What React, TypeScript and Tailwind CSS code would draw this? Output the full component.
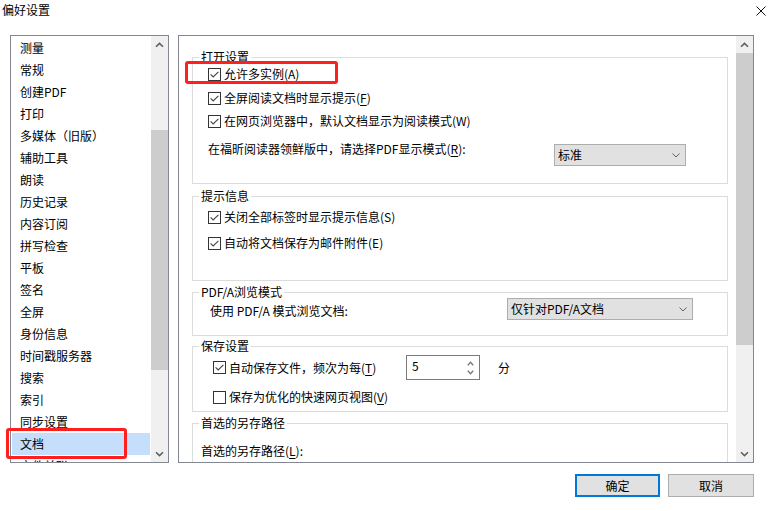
import React from "react";

type Kid = { children?: React.ReactNode };

function Check({ checked = true }: { checked?: boolean }) {
  return (
    <svg width="13" height="13" viewBox="0 0 13 13" className="block shrink-0">
      <rect x="0.5" y="0.5" width="12" height="12" fill="#fff" stroke="#333" />
      {checked && (
        <path d="M2.6 6.4 5.2 9 10.4 3.8" fill="none" stroke="#444" strokeWidth="1.1" />
      )}
    </svg>
  );
}

function U({ children }: Kid) {
  return <span className="underline underline-offset-[2px]">{children}</span>;
}

function CheckRow({
  checked = true,
  children,
  className = "",
}: Kid & { checked?: boolean; className?: string }) {
  return (
    <div className={"flex h-[18px] items-center gap-[3px] " + className}>
      <Check checked={checked} />
      <span className="whitespace-nowrap leading-[18px]">{children}</span>
    </div>
  );
}

function Chevron() {
  return (
    <svg width="8" height="5" viewBox="0 0 8 5" className="block shrink-0">
      <path d="M0.5 0.5 4 4 7.5 0.5" fill="none" stroke="#606060" />
    </svg>
  );
}

function Select({ value, className = "" }: { value: string; className?: string }) {
  return (
    <div
      className={
        "flex items-center justify-between border border-[#adadad] bg-[#e1e1e1] pl-[3px] pr-[5px] " +
        className
      }
    >
      <span className="whitespace-nowrap leading-[18px]">{value}</span>
      <Chevron />
    </div>
  );
}

function Arrow({ down = false }: { down?: boolean }) {
  return (
    <svg width="9" height="6" viewBox="0 0 9 6" className="block">
      <path
        d={down ? "M1 1.2 4.5 4.6 8 1.2" : "M1 4.8 4.5 1.4 8 4.8"}
        fill="none"
        stroke="#606060"
        strokeWidth="1.6"
      />
    </svg>
  );
}

function Group({ title, className = "", children }: Kid & { title: string; className?: string }) {
  return (
    <div className={"flex shrink-0 flex-col " + className}>
      <div className="flex h-[16px]">
        <div className="mt-[8px] w-[7px] border-l border-t border-[#dcdcdc]" />
        <span className="whitespace-nowrap px-[2px] leading-[16px]">{title}</span>
        <div className="mt-[8px] flex-1 border-r border-t border-[#dcdcdc]" />
      </div>
      <div className="flex flex-1 flex-col border-x border-b border-[#dcdcdc]">{children}</div>
    </div>
  );
}

const items = [
  "测量",
  "常规",
  "创建PDF",
  "打印",
  "多媒体（旧版）",
  "辅助工具",
  "朗读",
  "历史记录",
  "内容订阅",
  "拼写检查",
  "平板",
  "签名",
  "全屏",
  "身份信息",
  "时间戳服务器",
  "搜索",
  "索引",
  "同步设置",
  "文档",
  "文件关联",
];

export default function App() {
  return (
    <div className="relative h-[511px] w-[772px] overflow-hidden bg-white font-['Noto_Sans_CJK_SC','Noto_Sans',sans-serif] text-[12px] text-black">
      {/* title bar */}
      <div className="flex h-[35px] items-start justify-between">
        <span className="pl-[2px] pt-[2px] leading-[16px]">偏好设置</span>
        <div className="pr-[6px] pt-[6px]">
          <svg width="10" height="10" viewBox="0 0 10 10" className="block">
            <path d="M0.5 0.5 9.5 9.5 M9.5 0.5 0.5 9.5" stroke="#111" strokeWidth="1" />
          </svg>
        </div>
      </div>

      {/* main */}
      <div className="flex h-[428px] pl-[10px]">
        {/* category list */}
        <div className="flex w-[159px] shrink-0 border border-[#828790]">
          <div className="flex min-w-0 flex-1 flex-col overflow-hidden pt-[1px]">
            {items.map((t) => (
              <div
                key={t}
                className={
                  "mx-[1px] h-[22px] shrink-0 whitespace-nowrap pl-[8px] leading-[22px] " +
                  (t === "文档" ? "bg-[#c4defc]" : "")
                }
              >
                {t}
              </div>
            ))}
          </div>
          <div className="flex w-[17px] shrink-0 flex-col bg-[#f0f0f0]">
            <div className="flex h-[17px] items-center justify-center">
              <Arrow />
            </div>
            <div className="h-[77px]" />
            <div className="h-[240px] bg-[#cdcdcd]" />
            <div className="flex-1" />
            <div className="flex h-[17px] items-center justify-center">
              <Arrow down />
            </div>
          </div>
        </div>

        {/* settings panel */}
        <div className="ml-[9px] flex w-[576px] shrink-0 border border-[#828790]">
          <div className="flex min-w-0 flex-1 flex-col overflow-hidden pl-[13px] pr-[8px] pt-[13px]">
            <Group title="打开设置" className="h-[135px]">
              <div className="flex flex-col pl-[15px] pr-[41px]">
                <CheckRow>
                  允许多实例(<U>A</U>)
                </CheckRow>
                <CheckRow className="mt-[6px]">
                  全屏阅读文档时显示提示(<U>F</U>)
                </CheckRow>
                <CheckRow className="mt-[5px]">在网页浏览器中，默认文档显示为阅读模式(W)</CheckRow>
                <div className="mt-[10px] flex items-start">
                  <span className="whitespace-nowrap leading-[18px]">
                    在福昕阅读器领鲜版中，请选择PDF显示模式(<U>R</U>):
                  </span>
                  <Select value="标准" className="ml-auto mt-[4px] h-[22px] w-[132px]" />
                </div>
              </div>
            </Group>

            <Group title="提示信息" className="mt-[4px] h-[93px]">
              <div className="flex flex-col pl-[15px] pt-[4px]">
                <CheckRow>关闭全部标签时显示提示信息(S)</CheckRow>
                <CheckRow className="mt-[8px]">自动将文档保存为邮件附件(E)</CheckRow>
              </div>
            </Group>

            <Group title="PDF/A浏览模式" className="mt-[3px] h-[52px]">
              <div className="-mt-[2px] flex items-start pl-[17px] pr-[34px]">
                <span className="mt-[4px] whitespace-nowrap leading-[18px]">
                  使用 PDF/A 模式浏览文档:
                </span>
                <Select value="仅针对PDF/A文档" className="ml-auto h-[22px] w-[186px]" />
              </div>
            </Group>

            <Group title="保存设置" className="mt-[2px] h-[74px]">
              <div className="flex flex-col pl-[20px] pt-[1px]">
                <div className="flex h-[25px] items-center">
                  <div className="w-[193px] shrink-0">
                    <CheckRow>
                      自动保存文件，频次为每(<U>T</U>)
                    </CheckRow>
                  </div>
                  <div className="flex h-[25px] w-[74px] shrink-0 items-center justify-between border border-[#7a7a7a] bg-white pl-[5px] pr-[5px]">
                    <span className="-mt-[3px] leading-[18px]">5</span>
                    <div className="flex flex-col gap-[4px]">
                      <svg width="7" height="5" viewBox="0 0 7 5" className="block">
                        <path d="M0.8 4.2 3.5 1.2 6.2 4.2" fill="none" stroke="#777" strokeWidth="1.3" />
                      </svg>
                      <svg width="7" height="5" viewBox="0 0 7 5" className="block">
                        <path d="M0.8 0.8 3.5 3.8 6.2 0.8" fill="none" stroke="#777" strokeWidth="1.3" />
                      </svg>
                    </div>
                  </div>
                  <span className="ml-[18px] leading-[18px]">分</span>
                </div>
                <CheckRow checked={false} className="mt-[8px]">
                  保存为优化的快速网页视图(<U>V</U>)
                </CheckRow>
              </div>
            </Group>

            <Group title="首选的另存路径" className="mt-[3px] h-[120px]">
              <div className="pl-[8px] pt-[11px]">
                <span className="whitespace-nowrap leading-[18px]">
                  首选的另存路径(<U>L</U>):
                </span>
              </div>
            </Group>
          </div>
          <div className="flex w-[17px] shrink-0 flex-col bg-[#f0f0f0]">
            <div className="flex h-[17px] items-center justify-center">
              <Arrow />
            </div>
            <div className="h-[292px] bg-[#cdcdcd]" />
            <div className="flex-1" />
            <div className="flex h-[17px] items-center justify-center">
              <Arrow down />
            </div>
          </div>
        </div>
      </div>

      {/* footer buttons */}
      <div className="mt-[11px] flex justify-end gap-[8px] pr-[18px]">
        <button className="flex h-[23px] w-[85px] items-center justify-center border-2 border-[#0078d7] bg-[#e1e1e1] leading-[18px]">
          确定
        </button>
        <button className="flex h-[23px] w-[86px] items-center justify-center border border-[#adadad] bg-[#e1e1e1] leading-[18px]">
          取消
        </button>
      </div>

      {/* red annotation boxes */}
      <div className="absolute left-[185px] top-[61px] h-[23px] w-[153px] rounded-[3px] border-[3px] border-[#ff1f1f]" />
      <div className="absolute left-[6px] top-[428px] h-[31px] w-[121px] rounded-[3px] border-[3px] border-[#ff1f1f]" />
    </div>
  );
}
